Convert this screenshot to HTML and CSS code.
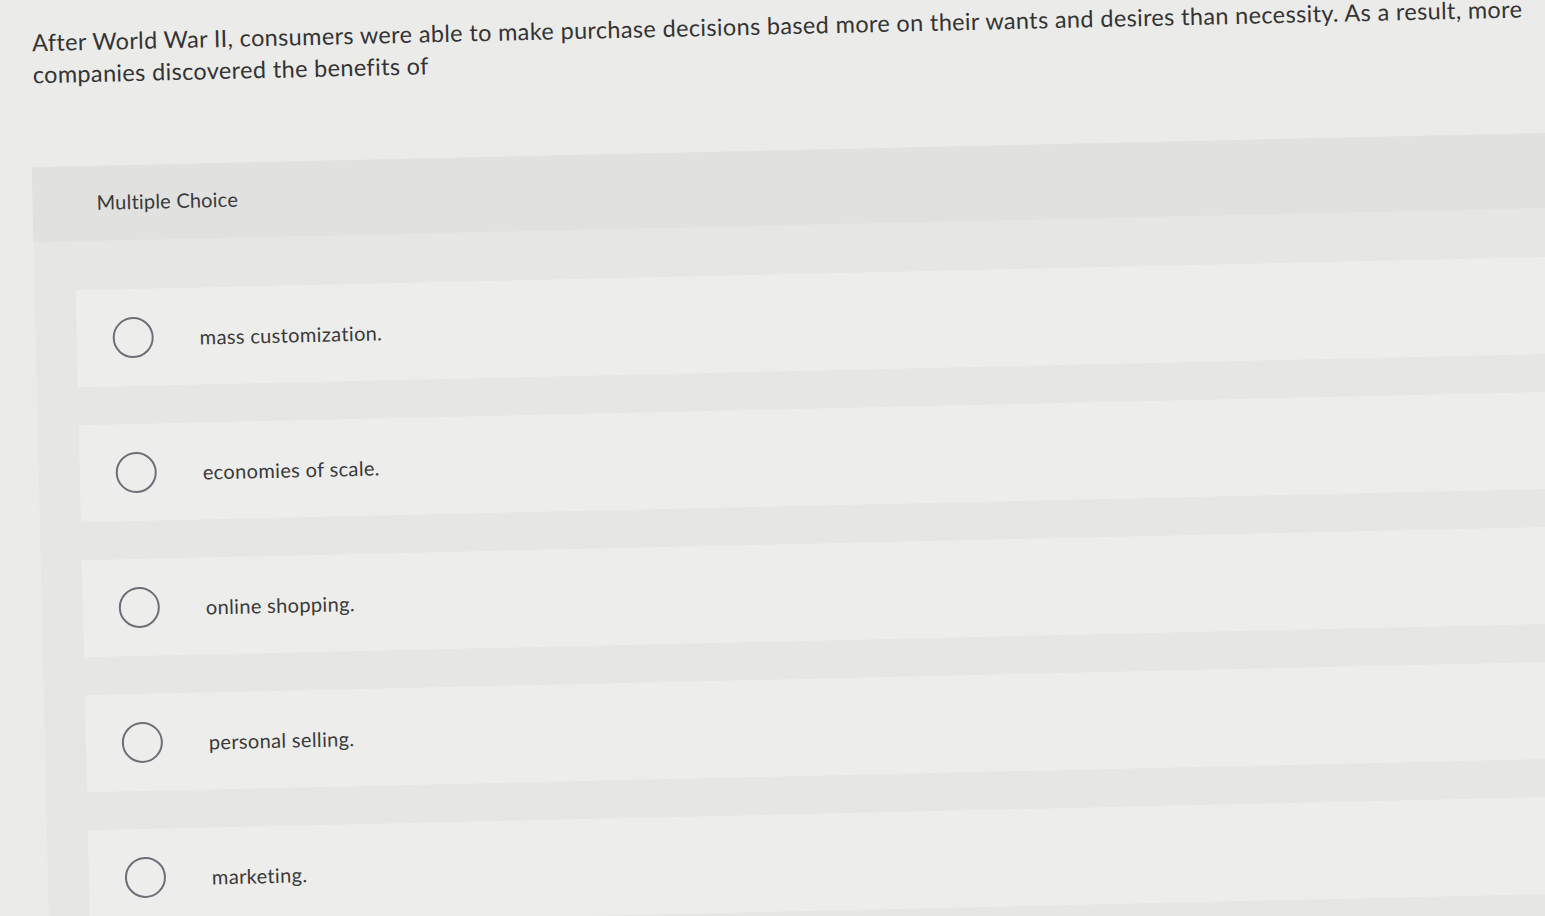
FILE: index.html
```html
<!DOCTYPE html>
<html lang="en">
<head>
<meta charset="utf-8">
<title>Multiple Choice</title>
<link rel="stylesheet" href="styles.css">
</head>
<body>
<main class="page">
  <p class="question">After World War II, consumers were able to make purchase decisions based more on their wants and desires than necessity. As a result, more companies discovered the benefits of</p>
  <section class="panel">
    <header class="panel-head">Multiple Choice</header>
    <div class="options">
      <label class="option"><span class="radio"></span><span class="option-text">mass customization.</span></label>
      <label class="option"><span class="radio"></span><span class="option-text">economies of scale.</span></label>
      <label class="option"><span class="radio"></span><span class="option-text">online shopping.</span></label>
      <label class="option"><span class="radio"></span><span class="option-text">personal selling.</span></label>
      <label class="option"><span class="radio"></span><span class="option-text">marketing.</span></label>
    </div>
  </section>
</main>
</body>
</html>
```

FILE: styles.css
```css
html, body {
  margin: 0;
  padding: 0;
  background: #ebebea;
  overflow: hidden;
  height: 100%;
}

.page {
  width: 1640px;
  padding-top: 27px;
  transform: rotate(-1.3deg);
  transform-origin: 0 0;
  font-family: "Lato", "Liberation Sans", sans-serif;
  color: #343434;
}

.question {
  margin: 0 0 0 31px;
  width: 1505px;
  font-size: 23.5px;
  letter-spacing: 0.35px;
  line-height: 32px;
}

.panel {
  margin-top: 77px;
  margin-left: 28px;
  background: #e6e6e5;
}

.panel-head {
  background: #e1e1e0;
  height: 75px;
  box-sizing: border-box;
  padding: 24px 0 0 64px;
  font-size: 20px;
  letter-spacing: 0.2px;
  line-height: 24px;
  color: #3a3a3a;
}

.options {
  display: flex;
  flex-direction: column;
  gap: 38px;
  padding: 49px 0 60px 41px;
}

.option {
  display: flex;
  align-items: center;
  height: 97px;
  padding-left: 36px;
  background: #ededec;
}

.radio {
  flex: none;
  width: 41px;
  height: 41px;
  box-sizing: border-box;
  border: 2px solid #6c6f78;
  border-radius: 50%;
}

.option-text {
  margin-left: 46px;
  font-size: 20px;
  letter-spacing: 0.35px;
  color: #3a3a3a;
}
```
